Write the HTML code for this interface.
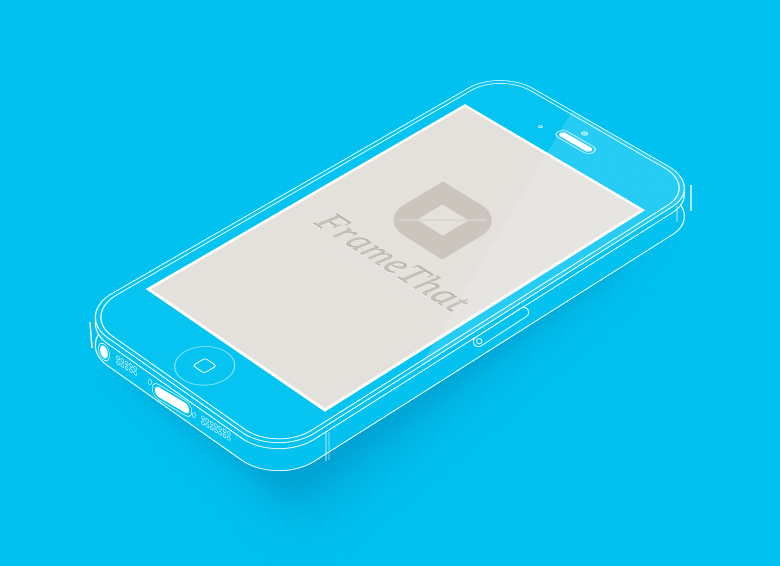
<!DOCTYPE html>
<html><head><meta charset="utf-8"><style>
html,body{margin:0;padding:0;background:#00c1f0;overflow:hidden;width:780px;height:566px}
#stage{position:absolute;left:0;top:0;width:780px;height:566px}
.proj{position:absolute;left:0;top:0;width:0;height:0;transform-origin:0 0;
transform:matrix3d(0.73488,0.46586,0,-0.00019877,-0.89300,0.44796,0,-0.00018543,0,0,1,0,465,106,0,1)}
.abs{position:absolute;box-sizing:border-box}
.face{left:-17px;top:-62px;width:237px;height:492px;border-radius:40px}
svg{position:absolute;left:0;top:0}
</style></head><body>
<div id="stage">
<svg width="780" height="566" viewBox="0 0 780 566" xmlns="http://www.w3.org/2000/svg">
<defs>
<filter id="blur" x="-50%" y="-50%" width="200%" height="200%"><feGaussianBlur stdDeviation="28"/></filter>
<filter id="blur2" x="-50%" y="-50%" width="200%" height="200%"><feGaussianBlur stdDeviation="12"/></filter>
</defs>
<g filter="url(#blur)" opacity="0.55"><path d="M150 370 L580 210 L620 260 L300 530 Z" fill="#0096c8"/></g>
<g filter="url(#blur2)" opacity="0.35"><path d="M110 370 L670 230 L290 500 Z" fill="#0090c0"/></g>
</svg>

<div style="position:absolute;left:0;top:0;transform:translateY(28px)">
<div class="proj"><div class="abs face" style="background:#04c2f0;border:1.6px solid #fff"></div></div>
</div>
<div style="position:absolute;left:0;top:0;transform:translateY(6px)">
<div class="proj"><div class="abs face" style="background:#04c3f1;border:1px solid #fff"></div></div>
</div>

<div class="proj">
<div class="abs face" style="background:#06c4f1;border:1.8px solid #fff;overflow:hidden">
<div class="abs" style="left:3px;top:3px;right:3px;bottom:3px;border:0.8px solid #fff;border-radius:37px"></div>
<div class="abs" style="left:14px;top:59px;width:209px;height:369px;background:#fff"></div>
<div class="abs" style="left:17px;top:62px;width:203px;height:363px;background:#e4e1dd"></div>
<!-- logo -->
<div class="abs" style="left:79px;top:152px;width:74px;height:76px;background:#ccc5be;border-radius:0 30px 0 30px"></div>
<div class="abs" style="left:101px;top:175px;width:30px;height:30px;background:#e4e1dd"></div>
<div class="abs" style="left:80px;top:189px;width:72px;height:1.5px;background:#dad5cf;transform:rotate(-46deg)"></div>
<div class="abs" style="left:45px;top:240px;width:180px;height:40px;font-family:'Liberation Serif',serif;font-style:italic;font-size:35px;line-height:40px;color:#c6bfb8;letter-spacing:0.5px;text-shadow:0 1px 0 #f2f0ee,0 -1px 0 #b3aca5;white-space:nowrap">FrameThat</div>
<!-- earpiece / camera -->
<div class="abs" style="left:100px;top:27px;width:36px;height:7px;border-radius:4px;background:#fff"></div>
<div class="abs" style="left:97px;top:24px;width:42px;height:13px;border-radius:7px;border:0.7px solid rgba(255,255,255,.85)"></div>
<div class="abs" style="left:112px;top:13px;width:6px;height:6px;border-radius:50%;border:0.8px solid #fff"></div>
<div class="abs" style="left:114px;top:15px;width:2px;height:2px;border-radius:50%;background:#fff"></div>
<div class="abs" style="left:80px;top:34px;width:4px;height:4px;border-radius:50%;border:0.7px solid #fff"></div>
<!-- home button -->
<div class="abs" style="left:94px;top:434px;width:48px;height:48px;border-radius:50%;border:1.6px solid rgba(255,255,255,.5)"></div>
<div class="abs" style="left:111px;top:451px;width:14px;height:14px;border-radius:3px;border:1.3px solid #fff"></div>
<!-- glare -->
<div class="abs" style="left:0;top:0;width:100%;height:100%;background:linear-gradient(66deg,rgba(255,255,255,0) 67%,rgba(255,255,255,.13) 67%)"></div>
</div>
</div>

<svg width="780" height="566" viewBox="0 0 780 566" xmlns="http://www.w3.org/2000/svg">
<line x1="90" y1="322" x2="92" y2="348" stroke="#fff" stroke-width="1.4"/>
<line x1="691" y1="185" x2="691" y2="211" stroke="#fff" stroke-width="1.4"/>
<line x1="326" y1="432" x2="326" y2="461" stroke="#fff" stroke-width="0.7"/>
<line x1="329" y1="432" x2="329" y2="460" stroke="#fff" stroke-width="0.5"/>
<line x1="677" y1="206" x2="677" y2="222" stroke="#fff" stroke-width="0.7"/>
<g transform="matrix(0.859,0.51,0,1,104,352)">
<ellipse cx="0" cy="0" rx="4.5" ry="6" fill="#fff"/>
<ellipse cx="0" cy="0" rx="6.5" ry="8" fill="none" stroke="#fff" stroke-width="0.7"/>
</g>
<g transform="matrix(0.859,0.51,0,1,172,400)">
<rect x="-20" y="-5" width="40" height="10" rx="5" fill="#fff"/>
<rect x="-23" y="-7.5" width="46" height="15" rx="7.5" fill="none" stroke="#fff" stroke-width="0.7"/>
</g>
<g fill="none" stroke="#fff" stroke-width="0.6">
<g transform="matrix(0.859,0.51,0,1,118,358)">
<circle cx="0" cy="0" r="1.7"/><circle cx="5" cy="0" r="1.7"/><circle cx="10" cy="0" r="1.7"/><circle cx="15" cy="0" r="1.7"/><circle cx="20" cy="0" r="1.7"/>
<circle cx="0" cy="5" r="1.7"/><circle cx="5" cy="5" r="1.7"/><circle cx="10" cy="5" r="1.7"/><circle cx="15" cy="5" r="1.7"/><circle cx="20" cy="5" r="1.7"/>
</g>
<ellipse cx="150" cy="382" rx="1.8" ry="2.4"/>
<ellipse cx="194" cy="415" rx="1.8" ry="2.4"/>
<g transform="matrix(0.859,0.51,0,1,203,418)">
<circle cx="0" cy="0" r="1.7"/><circle cx="5" cy="0" r="1.7"/><circle cx="10" cy="0" r="1.7"/><circle cx="15" cy="0" r="1.7"/><circle cx="20" cy="0" r="1.7"/><circle cx="25" cy="0" r="1.7"/><circle cx="30" cy="0" r="1.7"/>
<circle cx="0" cy="5" r="1.7"/><circle cx="5" cy="5" r="1.7"/><circle cx="10" cy="5" r="1.7"/><circle cx="15" cy="5" r="1.7"/><circle cx="20" cy="5" r="1.7"/><circle cx="25" cy="5" r="1.7"/><circle cx="30" cy="5" r="1.7"/>
</g>
</g>
<g transform="translate(501,327) rotate(-33)" fill="none" stroke="#fff" stroke-width="0.9">
<rect x="-32" y="-5" width="64" height="10" rx="5"/>
<circle cx="-26" cy="0" r="2.6"/>
</g>
</svg>
</div>
</body></html>
